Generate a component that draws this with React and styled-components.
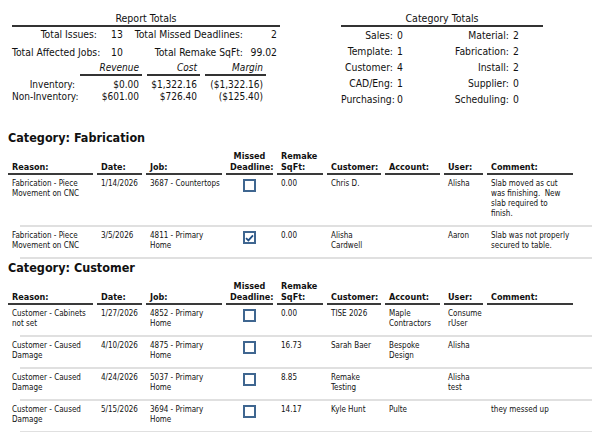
import React from 'react';
import styled, { createGlobalStyle } from 'styled-components';

const GlobalStyle = createGlobalStyle`
  html, body {
    margin: 0;
    background: #fff;
  }
  body {
    font-family: "DejaVu Sans Condensed", "DejaVu Sans", sans-serif;
    color: #111;
  }
`;

// Styles
const Page = styled.div`
  width: 600px;
  height: 432px;
  box-sizing: border-box;
  padding: 0 8px;
  overflow: hidden;
`;

const Summary = styled.div`
  display: flex;
  align-items: flex-start;
`;

const TotalsBlock = styled.div`
  width: ${({ $width }) => $width}px;
  margin-left: ${({ $offset }) => $offset}px;
`;

const BlockTitle = styled.div`
  padding-top: 11px;
  line-height: 14px;
  font-size: 10.5px;
  text-align: center;
  border-bottom: 2px solid #333;
`;

const PairGrid = styled.div`
  display: grid;
  grid-template-columns: ${({ $cols }) => $cols};
  grid-auto-rows: ${({ $rowHeight }) => $rowHeight}px;
  align-items: center;
  font-size: 10.3px;
  margin-top: ${({ $shift }) => $shift || 0}px;
`;

const Label = styled.span`
  text-align: right;
  white-space: nowrap;
`;

const Value = styled.span`
  text-align: ${({ $right }) => ($right ? 'right' : 'left')};
  padding-left: ${({ $pad }) => $pad || 0}px;
  white-space: nowrap;
`;

const MoneyGrid = styled.div`
  display: grid;
  grid-template-columns: 63px 62px 53px 61px;
  column-gap: 5px;
  grid-auto-rows: 12px;
  align-items: center;
  font-size: 10px;
  margin-top: 5px;
`;

const MoneyHead = styled.span`
  font-style: italic;
  text-align: right;
  padding-right: 3px;
  line-height: 13px;
  height: 13px;
  border-bottom: 2px solid #333;
  margin-bottom: 2px;
  align-self: end;
`;

const Money = styled.span`
  text-align: right;
  padding-right: 3px;
  white-space: nowrap;
`;

const CategoryTitle = styled.h2`
  margin: ${({ $top }) => $top}px 0 5px;
  font-size: 12.5px;
  line-height: 16px;
  font-weight: bold;
  color: #111;
`;

const Row = styled.div`
  display: grid;
  grid-template-columns: 85px 45px 76px 47px 46px 54px 55px 39px 86px;
  column-gap: 4px;
  align-items: ${({ $head }) => ($head ? 'end' : 'start')};
  padding: ${({ $head }) => ($head ? '0' : '4px 0 6px')};
`;

const HeadCell = styled.div`
  font-size: 9px;
  font-weight: bold;
  line-height: 11px;
  padding: 0 4px;
  text-align: ${({ $center }) => ($center ? 'center' : 'left')};
  border-bottom: 2px solid #3a3a3a;
`;

const Cell = styled.div`
  font-size: 8px;
  line-height: 10px;
  padding-left: 4px;
  white-space: pre-line;
  overflow-wrap: anywhere;
`;

const BoxCell = styled.div`
  display: flex;
  justify-content: center;
`;

const Box = styled.span`
  width: 13px;
  height: 13px;
  box-sizing: border-box;
  border: 2px solid #3f6690;
  background: #fff;
  display: flex;
  align-items: center;
  justify-content: center;
`;

const Divider = styled.div`
  margin-left: 12px;
  height: 2px;
  background: #e0e0e0;
`;

const Check = ({ checked }) => (
  <Box>
    {checked && (
      <svg width="9" height="8" viewBox="0 0 9 8">
        <path d="M1 4.2 L3.4 6.4 L8 1.4" fill="none" stroke="#1f4f86" strokeWidth="1.8" />
      </svg>
    )}
  </Box>
);

const heads = [
  'Reason:',
  'Date:',
  'Job:',
  'Missed Deadline:',
  'Remake SqFt:',
  'Customer:',
  'Account:',
  'User:',
  'Comment:',
];

const fabrication = [
  {
    reason: 'Fabrication - Piece Movement on CNC',
    date: '1/14/2026',
    job: '3687 - Countertops',
    missed: false,
    sqft: '0.00',
    customer: 'Chris D.',
    account: '',
    user: 'Alisha',
    comment: 'Slab moved as cut was finishing.\u00a0 New slab required to\nfinish.',
  },
  {
    reason: 'Fabrication - Piece Movement on CNC',
    date: '3/5/2026',
    job: '4811 - Primary Home',
    missed: true,
    sqft: '0.00',
    customer: 'Alisha Cardwell',
    account: '',
    user: 'Aaron',
    comment: 'Slab was not properly secured to table.',
  },
];

const customer = [
  {
    reason: 'Customer - Cabinets not set',
    date: '1/27/2026',
    job: '4852 - Primary Home',
    missed: false,
    sqft: '0.00',
    customer: 'TISE 2026',
    account: 'Maple Contractors',
    user: 'ConsumerUser',
    comment: '',
  },
  {
    reason: 'Customer - Caused Damage',
    date: '4/10/2026',
    job: '4875 - Primary Home',
    missed: false,
    sqft: '16.73',
    customer: 'Sarah Baer',
    account: 'Bespoke Design',
    user: 'Alisha',
    comment: '',
  },
  {
    reason: 'Customer - Caused Damage',
    date: '4/24/2026',
    job: '5037 - Primary Home',
    missed: false,
    sqft: '8.85',
    customer: 'Remake Testing',
    account: '',
    user: 'Alisha test',
    comment: '',
  },
  {
    reason: 'Customer - Caused Damage',
    date: '5/15/2026',
    job: '3694 - Primary Home',
    missed: false,
    sqft: '14.17',
    customer: 'Kyle Hunt',
    account: 'Pulte',
    user: '',
    comment: 'they messed up',
  },
];

const categoryTotals = [
  ['Sales:', 0, 'Material:', 2],
  ['Template:', 1, 'Fabrication:', 2],
  ['Customer:', 4, 'Install:', 2],
  ['CAD/Eng:', 1, 'Supplier:', 0],
  ['Purchasing:', 0, 'Scheduling:', 0],
];

const IssueTable = ({ rows }) => (
  <>
    <Row $head>
      {heads.map((h, i) => (
        <HeadCell key={h} $center={i === 3}>
          {h}
        </HeadCell>
      ))}
    </Row>
    {rows.map((r, i) => (
      <React.Fragment key={i}>
        <Row>
          <Cell>{r.reason}</Cell>
          <Cell>{r.date}</Cell>
          <Cell>{r.job}</Cell>
          <BoxCell>
            <Check checked={r.missed} />
          </BoxCell>
          <Cell>{r.sqft}</Cell>
          <Cell>{r.customer}</Cell>
          <Cell>{r.account}</Cell>
          <Cell>{r.user}</Cell>
          <Cell>{r.comment}</Cell>
        </Row>
        <Divider />
      </React.Fragment>
    ))}
  </>
);

const App = () => {
  return (
    <Page>
      <GlobalStyle />
      <Summary>
        <TotalsBlock $width={268} $offset={4}>
          <BlockTitle>Report Totals</BlockTitle>
          <PairGrid $cols="85px 32px 114px 34px" $rowHeight={18} $shift={-2}>
            <Label>Total Issues:</Label>
            <Value $pad={14}>13</Value>
            <Label>Total Missed Deadlines:</Label>
            <Value $right>2</Value>
            <Label>Total Affected Jobs:</Label>
            <Value $pad={14}>10</Value>
            <Label>Total Remake SqFt:</Label>
            <Value $right>99.02</Value>
          </PairGrid>
          <MoneyGrid>
            <span />
            <MoneyHead>Revenue</MoneyHead>
            <MoneyHead>Cost</MoneyHead>
            <MoneyHead>Margin</MoneyHead>
            <Label>Inventory:</Label>
            <Money>$0.00</Money>
            <Money>$1,322.16</Money>
            <Money>($1,322.16)</Money>
            <Label>Non-Inventory:</Label>
            <Money>$601.00</Money>
            <Money>$726.40</Money>
            <Money>($125.40)</Money>
          </MoneyGrid>
        </TotalsBlock>
        <TotalsBlock $width={202} $offset={61}>
          <BlockTitle>Category Totals</BlockTitle>
          <PairGrid $cols="52px 30px 86px 34px" $rowHeight={16}>
            {categoryTotals.map(([a, av, b, bv]) => (
              <React.Fragment key={a}>
                <Label>{a}</Label>
                <Value $pad={4}>{av}</Value>
                <Label>{b}</Label>
                <Value $pad={4}>{bv}</Value>
              </React.Fragment>
            ))}
          </PairGrid>
        </TotalsBlock>
      </Summary>

      <CategoryTitle $top={23}>Category: Fabrication</CategoryTitle>
      <IssueTable rows={fabrication} />

      <CategoryTitle $top={1}>Category: Customer</CategoryTitle>
      <IssueTable rows={customer} />
    </Page>
  );
};

export default App;
